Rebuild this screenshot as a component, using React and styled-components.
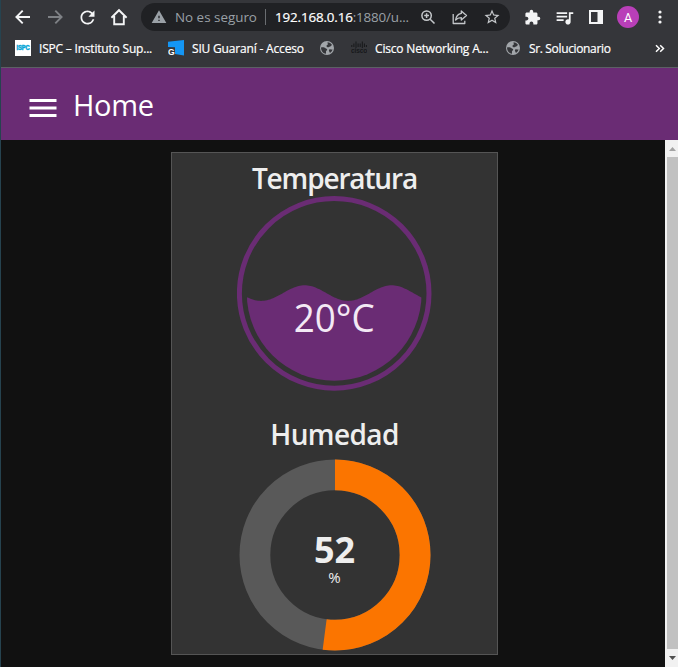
import React from 'react';
import styled, { createGlobalStyle } from 'styled-components';
import { MdExtension, MdQueueMusic, MdWarning, MdStarBorder, MdRefresh } from 'react-icons/md';

const GlobalStyle = createGlobalStyle`
  * { box-sizing: border-box; }
  body { margin: 0; background: #111; font-family: "Open Sans", "Noto Sans", sans-serif; }
`;

const Window = styled.div`
  display: flex;
  flex-direction: column;
  height: 667px;
  overflow: hidden;
  border-left: 1px solid #26434f;
  background: #111;
`;

const Toolbar = styled.header`
  display: flex;
  align-items: center;
  height: 34px;
  padding-left: 6px;
  background: #35363a;
  color: #f1f3f4;
`;

const IconButton = styled.button`
  display: flex;
  align-items: center;
  justify-content: center;
  flex: none;
  width: 32px;
  height: 28px;
  padding: 0;
  border: 0;
  background: none;
  color: ${(p) => (p.$muted ? '#7e8185' : p.$soft ? '#c4c7ca' : '#f4f5f6')};
`;

const AddressBar = styled.div`
  display: flex;
  align-items: center;
  width: 369px;
  height: 28px;
  margin: 0 6px;
  padding: 0 2px 0 10px;
  border-radius: 14px;
  background: #202124;
  color: #9aa0a6;
  font-size: 13.4px;
  white-space: nowrap;
  svg { flex: none; }
`;

const SecurityLabel = styled.span`
  flex: none;
  width: 98px;
  padding-left: 8px;
`;

const Separator = styled.i`
  flex: none;
  width: 1px;
  height: 16px;
  margin-right: 9px;
  background: #6a6d71;
`;

const Url = styled.span`
  flex: 1;
  letter-spacing: -0.15px;
  b { font-weight: 400; color: #fff; -webkit-text-stroke: 0.2px #fff; }
`;

const Avatar = styled.span`
  display: grid;
  place-items: center;
  width: 22px;
  height: 22px;
  border-radius: 50%;
  background: #b93fb8;
  color: #fff;
  font: 12.5px Roboto, sans-serif;
`;

const Bookmarks = styled.nav`
  display: flex;
  align-items: center;
  height: 34px;
  padding: 0 13px 5px 14px;
  border-bottom: 1px solid #5c6064;
  background: #35363a;
  color: #fff;
`;

const Bookmark = styled.a`
  display: flex;
  align-items: center;
  gap: 8px;
  flex: none;
  width: ${(p) => p.$width}px;
  font-size: 12px;
  letter-spacing: ${(p) => p.$tracking ?? -0.18}px;
  -webkit-text-stroke: 0.2px #fff;
  white-space: nowrap;
  svg { flex: none; -webkit-text-stroke: 0; }
`;

const Overflow = styled.span`
  display: flex;
  align-items: center;
  height: 16px;
  margin-left: auto;
`;

const AppBar = styled.div`
  display: flex;
  align-items: center;
  gap: 12px;
  flex: none;
  height: 72px;
  padding: 7px 0 0 24px;
  background: #6a2c74;
  color: #fff;
`;

const PageTitle = styled.h1`
  margin: 0;
  padding-bottom: 5px;
  font-size: 29px;
  line-height: 40px;
  font-weight: 400;
  letter-spacing: -0.3px;
`;

const Content = styled.main`
  display: flex;
  flex: 1;
  min-height: 0;
`;

const Dashboard = styled.section`
  flex: 1;
  padding: 12px 0 0 170px;
`;

const Card = styled.article`
  display: flex;
  flex-direction: column;
  align-items: center;
  width: 327px;
  height: 503px;
  border: 1px solid #555;
  background: #333;
  color: #eee;
`;

const CardTitle = styled.h2`
  margin: ${(p) => p.$top}px 0 ${(p) => p.$bottom ?? 0}px;
  font-size: 28px;
  line-height: 36px;
  font-weight: 600;
  letter-spacing: ${(p) => p.$tracking}px;
`;

const Chart = styled.svg`
  display: block;
  flex: none;
  font-family: "Open Sans", "Noto Sans", sans-serif;
`;

const Scrollbar = styled.aside`
  display: flex;
  flex-direction: column;
  align-items: flex-end;
  width: 13px;
  background: #f1f1f1;
`;

const ScrollArrow = styled.span`
  display: grid;
  place-items: center;
  width: 11px;
  height: ${(p) => p.$height}px;
`;

const ScrollThumb = styled.span`
  flex: 1;
  width: 11px;
  background: #c1c1c1;
`;

function ArrowIcon({ flip }) {
  return (
    <svg width="20" height="20" viewBox="0 0 20 20" fill="none" stroke="currentColor" strokeWidth="1.9">
      <path d={flip ? 'M3 10h13M10.3 3.7 16.6 10l-6.3 6.3' : 'M17 10H4M9.7 3.7 3.4 10l6.3 6.3'} />
    </svg>
  );
}

function HomeIcon() {
  return (
    <svg width="18" height="18" viewBox="0 0 18 18" fill="none" stroke="currentColor" strokeWidth="1.9">
      <path d="M1.4 9.7 9 2.2l7.6 7.5M4.2 8v8.2h9.6V8" />
    </svg>
  );
}

function ZoomIcon() {
  return (
    <svg width="16" height="16" viewBox="0 0 16 16" fill="none" stroke="currentColor" strokeWidth="1.5">
      <circle cx="6.6" cy="6.6" r="4.7" />
      <path d="m10.2 10.2 4.3 4.3M6.6 4.2V9M4.2 6.6H9" />
    </svg>
  );
}

function ShareIcon() {
  return (
    <svg width="18" height="18" viewBox="0 0 18 18" fill="none" stroke="currentColor" strokeWidth="1.3" strokeLinejoin="round">
      <path d="M2.2 6v9.5h11.6v-2.7M10.3 2.9l5.2 4.6-5.2 4.6V9.6C7.8 9.6 6 10.3 4.6 12c.5-3.6 2.6-6 5.7-6.6z" />
    </svg>
  );
}

function PanelIcon() {
  return (
    <svg width="14" height="14" viewBox="0 0 14 14">
      <path fill="currentColor" fillRule="evenodd" d="M0 0h14v14H0zM2 2v10h6.5V2z" />
    </svg>
  );
}

function DotsIcon() {
  return (
    <svg width="4" height="14" viewBox="0 0 4 14" fill="currentColor">
      <circle cx="2" cy="2" r="1.6" /><circle cx="2" cy="7" r="1.6" /><circle cx="2" cy="12" r="1.6" />
    </svg>
  );
}

function IspcIcon() {
  return (
    <svg width="16" height="16" viewBox="0 0 16 16">
      <rect width="16" height="16" fill="#fff" />
      <text x="1.6" y="10.4" textLength="12.8" lengthAdjust="spacingAndGlyphs" fontFamily="Liberation Sans" fontWeight="700" fontSize="6.6" fill="#08a5d6" stroke="#08a5d6" strokeWidth="0.5">ISPC</text>
    </svg>
  );
}

function SiuIcon() {
  return (
    <svg width="16" height="16" viewBox="0 0 16 16">
      <path d="M0 1.7 16 0v15.5L7 14V7.3L0 7z" fill="#1496f4" />
      <text x="0" y="14.8" fontFamily="Liberation Sans" fontWeight="700" fontSize="8.6" fill="#fff">G</text>
    </svg>
  );
}

function CiscoIcon() {
  return (
    <svg width="16" height="16" viewBox="0 0 16 16">
      <path d="M.8 5v2M2.9 3.5V7M5 1.5V8M7.1 3.5V7M9.2 3.5V7M11.3 1.5V8M13.4 3.5V7M15.4 5v2" stroke="#17181a" strokeWidth="1" />
      <text x="0" y="13" textLength="16" lengthAdjust="spacingAndGlyphs" fontFamily="Liberation Sans" fontWeight="700" fontSize="6.5" fill="#17181a">cisco</text>
    </svg>
  );
}

function GlobeIcon() {
  return (
    <svg width="16" height="16" viewBox="0 0 16 16">
      <circle cx="8" cy="8" r="7" fill="#a2a6aa" />
      <path d="M2 7.4c1.8-.4 3.6-.2 4.3.7.6.8 1.9.6 1.9 1.6 0 .8-1.2.8-1.2 1.8v2.2C4.300 13.500 2 11 2 7.400zM8.500 2.200c1.900.2 3.600 1.100 4.600 2.800-.9.3-.9 1.400-2 1.400-1 0-1 .9-2.100.9-.9 0-1.700-.7-1.500-1.500.2-.9 1.300-.7 1.300-1.600zM11 9.200c.9 0 1.500.5 2.600.4-.4 1.500-1.400 2.700-2.700 3.400-.1-1.100-1-1.500-1-2.400 0-.8.4-1.400 1.100-1.400z" fill="#35363a" />
    </svg>
  );
}

const WATER_LEVEL = 97.1;

function wavePath() {
  const points = [];
  for (let x = 9; x <= 186; x += 1.5) {
    const y = WATER_LEVEL - 7.8 * Math.cos(((x - 67.7) / 87) * 2 * Math.PI);
    points.push(`${x},${y.toFixed(2)}`);
  }
  return `M${points.join('L')}L186,195L9,195Z`;
}

function LiquidGauge({ value }) {
  return (
    <Chart width="195" height="195" viewBox="0 0 195 195">
      <clipPath id="tank"><circle cx="97.2" cy="97.4" r="87.4" /></clipPath>
      <circle cx="97.2" cy="97.4" r="94.8" fill="none" stroke="#6a2c74" strokeWidth="5" />
      <path d={wavePath()} clipPath="url(#tank)" fill="#6a2c74" />
      <text x="97.300" y="136" textAnchor="middle" fontSize="39" textLength="81" lengthAdjust="spacingAndGlyphs" fill="#f3e9f5">{value}</text>
    </Chart>
  );
}

function Donut({ percent }) {
  const radius = 80.1;
  const length = 2 * Math.PI * radius;
  return (
    <Chart width="192" height="192" viewBox="0 0 192 192">
      <g fill="none" strokeWidth="30.8">
        <circle cx="96" cy="96" r={radius} stroke="#595959" />
        <circle cx="96" cy="96" r={radius} stroke="#fb7500" strokeDasharray={`${(length * percent) / 100} ${length}`} transform="rotate(-90 96 96)" />
      </g>
      <text x="95.500" y="104" textAnchor="middle" fontSize="36" fontWeight="700" fill="#eee">{percent}</text>
      <text x="95.500" y="124" textAnchor="middle" fontSize="15" fill="#eee">%</text>
    </Chart>
  );
}

export default function App() {
  return (
    <Window>
      <GlobalStyle />
      <Toolbar>
        <IconButton aria-label="Atrás"><ArrowIcon /></IconButton>
        <IconButton aria-label="Adelante" $muted><ArrowIcon flip /></IconButton>
        <IconButton aria-label="Recargar"><MdRefresh size={21} /></IconButton>
        <IconButton aria-label="Inicio"><HomeIcon /></IconButton>
        <AddressBar>
          <MdWarning size={16} />
          <SecurityLabel>No es seguro</SecurityLabel>
          <Separator />
          <Url><b>192.168.0.16</b>:1880/u...</Url>
          <IconButton aria-label="Zoom" $soft><ZoomIcon /></IconButton>
          <IconButton aria-label="Compartir" $soft><ShareIcon /></IconButton>
          <IconButton aria-label="Favorito" $soft><MdStarBorder size={18} /></IconButton>
        </AddressBar>
        <IconButton aria-label="Extensiones"><MdExtension size={17} /></IconButton>
        <IconButton aria-label="Multimedia"><MdQueueMusic size={21} /></IconButton>
        <IconButton aria-label="Panel lateral"><PanelIcon /></IconButton>
        <IconButton aria-label="Perfil"><Avatar>A</Avatar></IconButton>
        <IconButton aria-label="Menú"><DotsIcon /></IconButton>
      </Toolbar>
      <Bookmarks>
        <Bookmark $width={153} $tracking={-0.2}><IspcIcon />ISPC – Instituto Sup...</Bookmark>
        <Bookmark $width={151}><SiuIcon />SIU Guaraní - Acceso</Bookmark>
        <Bookmark $width={32}><GlobeIcon /></Bookmark>
        <Bookmark $width={154}><CiscoIcon />Cisco Networking A...</Bookmark>
        <Bookmark $width={110} $tracking={-0.35}><GlobeIcon />Sr. Solucionario</Bookmark>
        <Overflow>
          <svg width="10" height="9" viewBox="0 0 10 9" fill="none" stroke="currentColor" strokeWidth="1.5">
            <path d="m1 1.2 3.3 3.3L1 7.8M5.2 1.2l3.3 3.3-3.3 3.3" />
          </svg>
        </Overflow>
      </Bookmarks>
      <AppBar>
        <svg width="36" height="36" viewBox="0 0 24 24" fill="currentColor">
          <path d="M3 18h18v-2H3v2zm0-5h18v-2H3v2zm0-7v2h18V6H3z" />
        </svg>
        <PageTitle>Home</PageTitle>
      </AppBar>
      <Content>
        <Dashboard>
          <Card>
            <CardTitle $top={7} $tracking={-1.15}>Temperatura</CardTitle>
            <LiquidGauge value="20°C" />
            <CardTitle $top={25} $bottom={7} $tracking={-0.6}>Humedad</CardTitle>
            <Donut percent={52} />
          </Card>
        </Dashboard>
        <Scrollbar>
          <ScrollArrow $height={17}>
            <svg width="7" height="4" viewBox="0 0 7 4"><path d="M0 4 3.5 0 7 4z" fill="#a3a3a3" /></svg>
          </ScrollArrow>
          <ScrollThumb />
          <ScrollArrow $height={18}>
            <svg width="7" height="4" viewBox="0 0 7 4"><path d="M0 0h7L3.5 4z" fill="#505050" /></svg>
          </ScrollArrow>
        </Scrollbar>
      </Content>
    </Window>
  );
}
